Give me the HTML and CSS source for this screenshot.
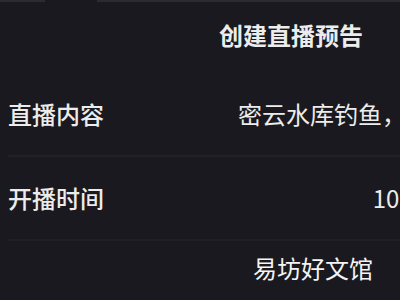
FILE: index.html
```html
<!DOCTYPE html>
<html lang="zh-CN">
<head>
<meta charset="utf-8">
<link rel="stylesheet" href="styles.css">
</head>
<body>
<div class="screen">
  <div class="topline"><span class="seg seg-a"></span><span class="seg seg-gap"></span><span class="seg seg-b"></span></div>
  <header class="title">创建直播预告</header>
  <section class="form">
    <div class="row">
      <span class="label">直播内容</span>
      <span class="value">密云水库钓鱼，</span>
    </div>
    <div class="row">
      <span class="label">开播时间</span>
      <span class="value">10,</span>
    </div>
  </section>
  <footer class="watermark">易坊好文馆</footer>
</div>
</body>
</html>
```

FILE: styles.css
```css
html, body {
  margin: 0;
  padding: 0;
  background: #1a1920;
}
.screen {
  width: 400px;
  height: 300px;
  overflow: hidden;
  background: #1a1920;
  font-family: "Noto Sans CJK SC", "Noto Sans", sans-serif;
  color: #ececec;
  display: flex;
  flex-direction: column;
}
.topline {
  display: flex;
  height: 2px;
}
.seg-a { width: 45px; background: #2b2a31; }
.seg-gap { width: 52px; }
.seg-b { flex: 1; background: #2b2a31; }
.title {
  font-size: 24px;
  line-height: 24px;
  font-weight: 700;
  padding: 21px 0 0 219px;
  height: 50px;
  box-sizing: content-box;
}
.form {
  padding-left: 8px;
  margin-right: -6px;
}
.row {
  display: flex;
  justify-content: space-between;
  align-items: center;
  height: 82px;
  border-bottom: 2px solid #212027;
  font-size: 24px;
  line-height: 24px;
  white-space: nowrap;
}
.label {
  font-weight: 500;
}
.value {
  font-weight: 400;
}
.watermark {
  font-size: 24px;
  line-height: 24px;
  font-weight: 400;
  color: #f4f4f4;
  padding: 15px 0 0 253px;
}
```
